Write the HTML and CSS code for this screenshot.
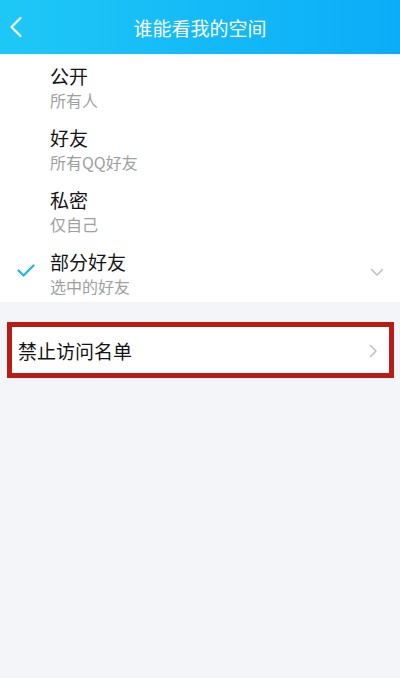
FILE: index.html
```html
<!DOCTYPE html>
<html lang="zh">
<head>
<meta charset="utf-8">
<link rel="stylesheet" href="styles.css">
</head>
<body>
<div class="page">
  <header class="topbar">
    <svg class="back" width="14" height="22" viewBox="0 0 14 22"><path d="M11.5 2 L2.5 11 L11.5 20" fill="none" stroke="#fff" stroke-width="2.2" stroke-linecap="round" stroke-linejoin="round"/></svg>
    <div class="title">谁能看我的空间</div>
  </header>
  <ul class="options">
    <li class="opt"><div class="mark"></div><div class="texts"><div class="name">公开</div><div class="desc">所有人</div></div></li>
    <li class="opt"><div class="mark"></div><div class="texts"><div class="name">好友</div><div class="desc">所有QQ好友</div></div></li>
    <li class="opt"><div class="mark"></div><div class="texts"><div class="name">私密</div><div class="desc">仅自己</div></div></li>
    <li class="opt"><div class="mark"><svg width="18" height="14" viewBox="0 0 18 14"><path d="M1.5 6.5 L6.5 11.5 L16.5 1.5" fill="none" stroke="#1fb6e6" stroke-width="2.2" stroke-linecap="round" stroke-linejoin="round"/></svg></div><div class="texts"><div class="name">部分好友</div><div class="desc">选中的好友</div></div>
      <svg class="down" width="14" height="9" viewBox="0 0 14 9"><path d="M1.5 1.5 L7 7 L12.5 1.5" fill="none" stroke="#bdbdbd" stroke-width="1.5" stroke-linecap="round" stroke-linejoin="round"/></svg>
    </li>
  </ul>
  <div class="blockbox">
    <div class="blockname">禁止访问名单</div>
    <svg class="right" width="9" height="14" viewBox="0 0 9 14"><path d="M1.5 1.5 L7 7 L1.5 12.5" fill="none" stroke="#bdbdbd" stroke-width="1.5" stroke-linecap="round" stroke-linejoin="round"/></svg>
  </div>
</div>
</body>
</html>
```
FILE: styles.css
```css
html, body {
  margin: 0;
  padding: 0;
}
body {
  background: #f4f5f9;
  font-family: "Noto Sans CJK SC", "Noto Sans", sans-serif;
}
.page {
  width: 400px;
  min-height: 678px;
  background: #f4f5f9;
}
.topbar {
  height: 54px;
  background: linear-gradient(to right, #1ec8f6, #0badf8);
  display: flex;
  align-items: center;
  justify-content: center;
  position: relative;
}
.back {
  position: absolute;
  left: 9px;
  top: 16px;
}
.title {
  color: #fff;
  font-size: 19px;
  line-height: 24px;
  margin-top: 2px;
}
.options {
  list-style: none;
  margin: 0;
  padding: 0;
  background: #fff;
}
.opt {
  height: 62px;
  display: flex;
  align-items: center;
  box-sizing: border-box;
}
.mark {
  width: 50px;
  display: flex;
  justify-content: center;
  padding-left: 2px;
  box-sizing: border-box;
}
.texts {
  flex: 1;
  padding-top: 5px;
}
.name {
  font-size: 19px;
  line-height: 24px;
  color: #141414;
}
.desc {
  font-size: 16px;
  line-height: 24px;
  color: #a0a0a0;
}
.down {
  margin-right: 16px;
  margin-top: 2px;
}
.blockbox {
  margin: 20px 6px 0 7px;
  height: 56px;
  border: 5px solid #b71c17;
  background: #fff;
  box-sizing: border-box;
  display: flex;
  align-items: center;
  padding: 2px 11px 0 6px;
}
.blockname {
  flex: 1;
  font-size: 19px;
  line-height: 24px;
  color: #141414;
}
```
